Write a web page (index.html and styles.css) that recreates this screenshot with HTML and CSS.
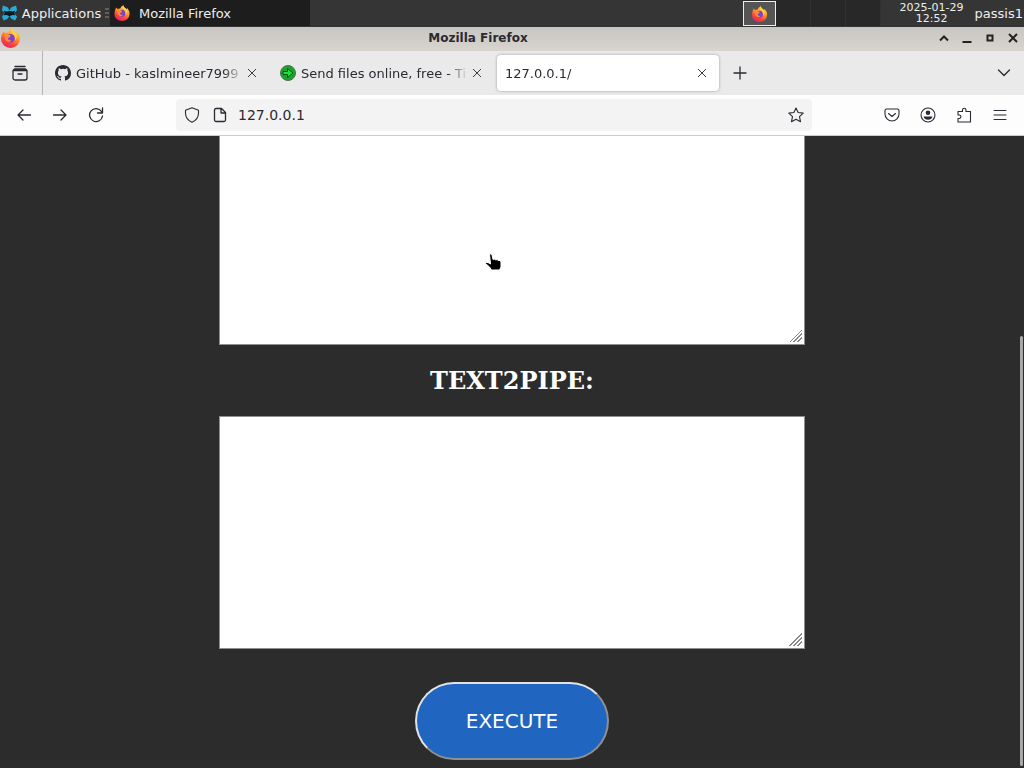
FILE: index.html
```html
<!DOCTYPE html>
<html lang="en">
<head>
<meta charset="utf-8">
<title>Mozilla Firefox</title>
<link rel="stylesheet" href="styles.css">
</head>
<body>
<svg class="defs" aria-hidden="true">
  <defs>
    <linearGradient id="flame" x1="0.8" y1="0" x2="0.3" y2="1">
      <stop offset="0" stop-color="#ffe64a"/>
      <stop offset="0.4" stop-color="#ff9a28"/>
      <stop offset="0.75" stop-color="#fb4040"/>
      <stop offset="1" stop-color="#e4206e"/>
    </linearGradient>
    <symbol id="firefox" viewBox="0 0 20 20">
      <path fill="url(#flame)" d="M2.8 3.2 4.5 5Q6 4.300 7.500 4.600 9 1.500 11.600.3 12 2.700 14.300 4 15.300 4.700 15.600 5.500L16.400 3.700Q19.800 7.200 19.500 11A9.500 9 0 0 1 .5 11Q.4 6.800 2.800 3.200Z"/>
      <circle cx="10" cy="10.300" r="4.300" fill="#7542d5"/>
      <path fill="#ff8a30" d="M4.200 6.500Q7 5.500 10.300 7.500L9.500 9 7.300 10.200Q8 13 11.500 12.200 9 15.500 5.500 12.500 3.500 10 4.200 6.500Z"/>
      <path fill="#ffd044" d="M11.600.3Q9.500 4 12.300 6 15.500 8.500 14.200 12.500 18 9 15.600 5.500 14.500 4 13 3.200 11.700 2 11.600.3Z"/>
    </symbol>
    <symbol id="close" viewBox="0 0 10 10"><path d="M1 1 9 9M9 1 1 9"/></symbol>
  </defs>
</svg>

<header class="panel">
  <button class="panel-menu" type="button">
    <svg class="xfce" viewBox="0 0 18 18" aria-hidden="true">
      <path fill="#2ba9d6" d="M2 1 7 3 9 6 11 3 16 1 17 6 14 9 17 13 15 17 11 15 9 12 7 15 3 17 1 13 4 9 1 6Z"/>
      <path fill="#0b1a22" d="M3 6.500 6 7.500 9 6.500 12 7.500 15 6.500 14 9 15 11.500 12 11 9 12.500 6 11 3 11.500 4 9Z"/>
    </svg>
    <span>Applications</span>
    <svg class="grip" viewBox="0 0 4 10" aria-hidden="true"><path d="M0 1h4M0 5h4M0 9h4"/></svg>
  </button>
  <button class="panel-task" type="button">
    <svg class="task-logo" aria-hidden="true"><use href="#firefox"/></svg>
    <span>Mozilla Firefox</span>
  </button>
  <div class="panel-end">
    <div class="pager">
      <button class="desk desk-current" type="button" aria-label="Workspace 1"><svg aria-hidden="true"><use href="#firefox"/></svg></button>
      <button class="desk" type="button" aria-label="Workspace 2"></button>
      <button class="desk" type="button" aria-label="Workspace 3"></button>
      <button class="desk" type="button" aria-label="Workspace 4"></button>
    </div>
    <time class="clock" datetime="2025-01-29T12:52">2025-01-29<br>12:52</time>
    <span class="user">passis1</span>
  </div>
</header>

<div class="titlebar">
  <svg class="title-logo" aria-hidden="true"><use href="#firefox"/></svg>
  <span class="title">Mozilla Firefox</span>
  <div class="window-buttons">
    <button type="button" aria-label="Roll up"><svg viewBox="0 0 10 10"><path d="M1 7.500 5 3.500 9 7.500"/></svg></button>
    <button type="button" aria-label="Minimize"><svg viewBox="0 0 10 10"><path d="M.5 9h9"/></svg></button>
    <button type="button" aria-label="Maximize"><svg viewBox="0 0 10 10"><path d="M2.500 2.500h5v5h-5z"/></svg></button>
    <button type="button" aria-label="Close window"><svg viewBox="0 0 10 10"><path d="M1 1 9 9M9 1 1 9"/></svg></button>
  </div>
</div>

<div class="tabs">
  <button class="view" type="button" aria-label="Firefox View">
    <svg class="icon" viewBox="0 0 16 16"><path d="M3 1.500h10M1 5.500h14M1 5.500 2.500 4h11L15 5.500V13a2 2 0 0 1-2 2H3a2 2 0 0 1-2-2ZM6 9h4"/></svg>
  </button>
  <div class="tab">
    <button class="tab-main" type="button">
      <svg class="icon favicon" viewBox="0 0 16 16"><path class="solid" d="M8 0C3.580 0 0 3.580 0 8c0 3.540 2.290 6.530 5.470 7.590.4.070.55-.17.55-.38 0-.19-.01-.82-.01-1.490-2.010.37-2.530-.49-2.690-.94-.09-.23-.48-.94-.82-1.130-.28-.15-.68-.52-.01-.53.63-.01 1.080.58 1.230.82.72 1.210 1.870.87 2.330.66.07-.52.28-.87.51-1.070-1.780-.2-3.640-.89-3.640-3.950 0-.87.31-1.590.82-2.150-.08-.2-.36-1.020.08-2.120 0 0 .67-.21 2.200.82a7.600 7.600 0 0 1 4 0c1.530-1.040 2.200-.82 2.200-.82.44 1.100.16 1.920.08 2.120.51.56.82 1.270.82 2.150 0 3.070-1.870 3.750-3.650 3.950.29.25.54.73.54 1.480 0 1.070-.01 1.930-.01 2.200 0 .21.15.46.55.38A8 8 0 0 0 16 8c0-4.420-3.580-8-8-8Z"/></svg>
      <span class="tab-text">GitHub - kaslmineer7999</span>
    </button>
    <button class="tab-close" type="button" aria-label="Close tab"><svg><use href="#close"/></svg></button>
  </div>
  <div class="tab">
    <button class="tab-main" type="button">
      <svg class="favicon" viewBox="0 0 16 16"><circle cx="8" cy="8" r="7.500" fill="#18a52c" stroke="#52704a"/><path fill="#1ee040" stroke="#07551a" stroke-linejoin="round" d="M3 6.500h4.500V3.500L13 8 7.500 12.500V9.500H3Z"/></svg>
      <span class="tab-text">Send files online, free - Ti</span>
    </button>
    <button class="tab-close" type="button" aria-label="Close tab"><svg><use href="#close"/></svg></button>
  </div>
  <div class="tab tab-active">
    <button class="tab-main" type="button"><span class="tab-text">127.0.0.1/</span></button>
    <button class="tab-close" type="button" aria-label="Close tab"><svg><use href="#close"/></svg></button>
  </div>
  <button class="tool" type="button" aria-label="New tab"><svg class="icon" viewBox="0 0 16 16"><path d="M8 2v12M2 8h12"/></svg></button>
  <button class="tool all-tabs" type="button" aria-label="List all tabs"><svg class="icon" viewBox="0 0 16 16"><path d="M2.500 5 8 10.500 13.500 5"/></svg></button>
</div>

<nav class="navbar">
  <div class="nav-side">
    <button class="tool" type="button" aria-label="Back"><svg class="icon" viewBox="0 0 16 16"><path d="M14.500 8H2M7 3 2 8 7 13"/></svg></button>
    <button class="tool" type="button" aria-label="Forward"><svg class="icon" viewBox="0 0 16 16"><path d="M1.500 8h12.500M9 3 14 8 9 13"/></svg></button>
    <button class="tool" type="button" aria-label="Reload"><svg class="icon" viewBox="0 0 16 16"><path d="M13.500 4.500A6.500 6.500 0 1 0 14.500 9M14.500 1v5h-5"/></svg></button>
  </div>
  <div class="urlbar">
    <svg class="icon thin" viewBox="0 0 16 16" aria-hidden="true"><path d="M8 .8 14.500 3.200V6c0 4.500-2.500 7.500-6.500 9.200C4 13.500 1.500 10.500 1.500 6V3.200Z"/></svg>
    <svg class="icon" viewBox="0 0 16 16" aria-hidden="true"><path d="M4 1.500h5.500L13.500 5.500V13a1.500 1.500 0 0 1-1.500 1.500H4A1.500 1.500 0 0 1 2.500 13V3A1.500 1.500 0 0 1 4 1.500ZM9 1.500V6h4.500"/></svg>
    <input class="address" type="text" value="127.0.0.1" aria-label="Address">
    <button class="star" type="button" aria-label="Bookmark"><svg class="icon thin" viewBox="0 0 16 16"><path d="M8 1 10.100 5.500 15.200 6.100 11.500 9.600 12.500 14.700 8 12.200 3.500 14.700 4.500 9.600.8 6.100 5.900 5.500Z"/></svg></button>
  </div>
  <div class="nav-side nav-end">
    <button class="tool" type="button" aria-label="Pocket"><svg class="icon thin" viewBox="0 0 16 16"><path d="M2.500 2h11A1.500 1.500 0 0 1 15 3.500V7A7 7 0 0 1 1 7V3.500A1.500 1.500 0 0 1 2.500 2ZM4.500 6.500 8 9.500 11.500 6.500"/></svg></button>
    <button class="tool" type="button" aria-label="Account"><svg class="icon thin" viewBox="0 0 16 16"><circle cx="8" cy="8" r="7"/><circle class="solid" cx="8" cy="5.800" r="2.300"/><path class="solid" d="M3.500 9.500h9Q11.500 12.800 8 12.800 4.500 12.800 3.500 9.500Z"/></svg></button>
    <button class="tool" type="button" aria-label="Extensions"><svg class="icon thin" viewBox="0 0 16 16"><path d="M2 15V11.500H3.500A1.800 1.800 0 0 0 3.500 8H2V4.500H6.500V3A1.700 1.700 0 0 1 10 3V4.500H14.500V15Z"/></svg></button>
    <button class="tool" type="button" aria-label="Menu"><svg class="icon thin" viewBox="0 0 16 16"><path d="M2 3.500h12M2 8h12M2 12.500h12"/></svg></button>
  </div>
</nav>

<main class="page">
  <form class="form">
    <textarea class="box" aria-label="Text"></textarea>
    <h2 class="heading"><label for="pipe">TEXT2PIPE:</label></h2>
    <textarea class="box" id="pipe"></textarea>
    <button class="execute" type="button">EXECUTE</button>
  </form>
  <div class="scroll-thumb"></div>
  <svg class="pointer" viewBox="0 0 17 18" aria-hidden="true"><path d="M4.500 1Q6.500 0 7 2L8 6.500 9.500 6 10.500 7 12 6.500 13 7.500 15 7.500 16 9V14L14.500 17H6.500L4.500 14 .5 10.500Q1 9 3 9.500L5.500 11Z"/></svg>
</main>
</body>
</html>
```

FILE: styles.css
```css
* {
  box-sizing: border-box;
}

body {
  margin: 0;
  min-height: 100vh;
  display: flex;
  flex-direction: column;
  font-family: "DejaVu Sans", sans-serif;
  font-size: 13px;
  color: #2b2a33;
  background: #2c2c2c;
}

button {
  margin: 0;
  padding: 0;
  border: 0;
  background: none;
  color: inherit;
  font: inherit;
}

svg {
  display: block;
  flex: none;
}

.defs {
  position: absolute;
  width: 0;
  height: 0;
}

.icon {
  width: 16px;
  height: 16px;
  fill: none;
  stroke: #2b2a33;
  stroke-width: 1.3;
  stroke-linecap: round;
  stroke-linejoin: round;
}

.thin {
  stroke-width: 1.1;
}

.solid {
  fill: #2b2a33;
  stroke: none;
}

/* Desktop panel */
.panel {
  height: 27px;
  padding-bottom: 1px;
  display: flex;
  background: #353535;
  color: #eeeeee;
  white-space: nowrap;
}

.panel-menu {
  width: 110px;
  padding-left: 1px;
  display: flex;
  align-items: center;
  gap: 2px;
}

.panel-menu span {
  width: 83px;
}

.xfce {
  width: 17px;
  height: 18px;
}

.grip {
  width: 4px;
  height: 10px;
  stroke: #8a8a8a;
}

.panel-task {
  width: 200px;
  padding-left: 4px;
  display: flex;
  align-items: center;
  gap: 9px;
  background: #1d1d1d;
}

.task-logo {
  width: 16px;
  height: 16px;
}

.panel-end {
  margin-left: auto;
  padding-right: 1px;
  display: flex;
  align-items: center;
}

.pager {
  height: 26px;
  display: flex;
  padding-top: 1px;
  background: #282828;
}

.desk {
  width: 35px;
  border-right: 1px solid #323232;
}

.desk-current {
  width: 33px;
  display: grid;
  place-items: center;
  border: 1px solid #eeeeee;
  background: #555555;
}

.desk-current svg {
  width: 17px;
  height: 16px;
}

.clock {
  width: 94px;
  padding-left: 8px;
  font-size: 11px;
  line-height: 11px;
  text-align: center;
}

/* Window title */
.titlebar {
  height: 24px;
  padding: 0 6px 2px 0;
  display: grid;
  grid-template-columns: 1fr auto 1fr;
  align-items: center;
  background: linear-gradient(#c8c6c3, #d8d4cf);
}

.title-logo {
  width: 21px;
  height: 20px;
}

.title {
  padding-right: 62px;
  font-size: 12px;
  font-weight: bold;
}

.window-buttons {
  justify-self: end;
  display: flex;
  gap: 13px;
}

.window-buttons svg {
  width: 10px;
  height: 10px;
  fill: none;
  stroke: #222222;
  stroke-width: 2;
}

/* Tab strip */
.tabs {
  height: 44px;
  display: flex;
  align-items: center;
  background: #eaeaea;
}

.view {
  width: 43px;
  height: 44px;
  padding-left: 12px;
  border-right: 1px solid #b5b5b5;
}

.tab {
  flex: 0 1 225px;
  min-width: 0;
  height: 36px;
  padding: 0 11px 0 12px;
  display: flex;
  align-items: center;
}

.tab-active {
  flex-basis: 222px;
  margin-left: 4px;
  padding: 0 12px 0 8px;
  border-radius: 4px;
  background: #ffffff;
  box-shadow: 0 0 3px #999999;
}

.tab-main {
  flex: 1;
  min-width: 0;
  display: flex;
  align-items: center;
  gap: 5px;
  text-align: left;
}

.favicon {
  width: 16px;
  height: 16px;
}

.tab-text {
  flex: 1;
  overflow: hidden;
  white-space: nowrap;
  mask-image: linear-gradient(to left, transparent, #000000 20px);
}

.tab-close {
  width: 14px;
  height: 24px;
  display: grid;
  place-items: center end;
}

.tab-close svg {
  width: 10px;
  height: 10px;
  stroke: #3b3b3b;
}

.tool {
  width: 36px;
  height: 32px;
  display: grid;
  place-items: center;
  flex: none;
}

.tabs .tool {
  margin-left: 3px;
}

.tabs .all-tabs {
  margin-left: auto;
  margin-right: 2px;
}

/* Navigation bar */
.navbar {
  height: 41px;
  padding: 0 6px;
  display: flex;
  align-items: center;
  background: #fdfdfd;
  border-bottom: 1px solid #cccccc;
}

.nav-side {
  flex: 0 0 170px;
  display: flex;
}

.nav-end {
  flex-basis: 206px;
  justify-content: flex-end;
}

.urlbar {
  flex: 1;
  min-width: 0;
  height: 32px;
  padding: 0 8px;
  display: flex;
  align-items: center;
  gap: 12px;
  border-radius: 4px;
  background: #f3f3f3;
}

.address {
  flex: 1;
  min-width: 0;
  margin-left: -2px;
  padding: 0;
  border: 0;
  outline: 0;
  background: none;
  color: #2b2a33;
  font: inherit;
  font-size: 14px;
}

/* Page content */
.page {
  position: relative;
  flex: 1 0 0;
  min-height: 0;
  padding-bottom: 8px;
  overflow: hidden;
  display: flex;
  flex-direction: column;
  justify-content: flex-end;
}

.form {
  display: flex;
  flex-direction: column;
  align-items: center;
}

.box {
  width: 586px;
  max-width: 100%;
  height: 233px;
  border: 1px solid #8f8f8f;
  background: #ffffff;
  resize: both;
}

.box::-webkit-resizer {
  background:
    linear-gradient(135deg, transparent 50%, #888888 50% 56%, transparent 56% 65%, #888888 65% 71%, transparent 71% 80%, #888888 80% 86%, transparent 86%)
    0 0 / 13px 13px no-repeat;
}

.heading {
  margin: 22px 0 21px;
  font: bold 24px/28px "DejaVu Serif", serif;
  color: #ffffff;
}

.execute {
  margin-top: 33px;
  padding: 25px 49px;
  border: 2px outset #e3e3e3;
  border-radius: 39px;
  background: #2066c0;
  color: #ffffff;
  font-size: 20px;
  line-height: 24px;
}

.scroll-thumb {
  position: absolute;
  right: 1px;
  bottom: 2px;
  width: 3px;
  height: 68%;
  border-radius: 2px;
  background: #a8a8a8;
}

.pointer {
  position: absolute;
  left: 485px;
  top: 117px;
  width: 17px;
  height: 18px;
  stroke: #ffffff;
}
```
